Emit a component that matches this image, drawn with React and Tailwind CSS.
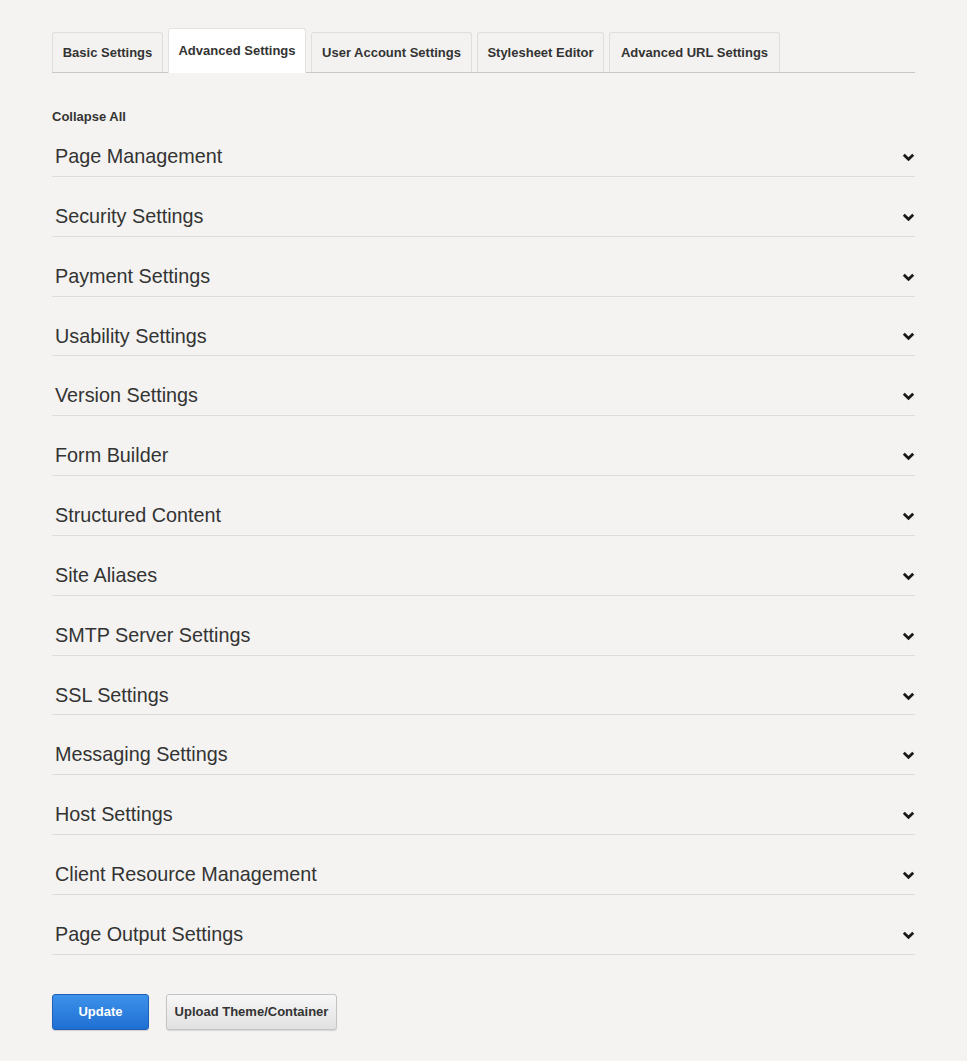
import React from "react";

const tabs = [
  { label: "Basic Settings", w: "w-[111px]" },
  { label: "Advanced Settings", w: "w-[138px]", active: true },
  { label: "User Account Settings", w: "w-[161px]" },
  { label: "Stylesheet Editor", w: "w-[127px]" },
  { label: "Advanced URL Settings", w: "w-[171px]" },
];

const sections = [
  "Page Management",
  "Security Settings",
  "Payment Settings",
  "Usability Settings",
  "Version Settings",
  "Form Builder",
  "Structured Content",
  "Site Aliases",
  "SMTP Server Settings",
  "SSL Settings",
  "Messaging Settings",
  "Host Settings",
  "Client Resource Management",
  "Page Output Settings",
];

function Chevron() {
  return (
    <svg width="13" height="9" viewBox="0 0 13 9" className="mt-[1px]">
      <polyline points="1.8,1.8 6.5,6.3 11.2,1.8" fill="none" stroke="#1a1a1a" strokeWidth="2.8" />
    </svg>
  );
}

export default function App() {
  return (
    <div className="min-h-[1061px] bg-[#f4f3f1] text-[#333] font-['Liberation_Sans',Arial,sans-serif]">
      <div className="ml-[52px] w-[863px] pt-[28px]">
        {/* tabs */}
        <div className="flex items-end gap-[5px] border-b border-[#c9c9c9] h-[45px]">
          {tabs.map((t) =>
            t.active ? (
              <div
                key={t.label}
                className={`${t.w} h-[45px] -mb-px bg-white border border-b-0 border-[#e2e2e2] rounded-t-[3px] flex items-center justify-center text-[13px] font-bold pb-[1px]`}
              >
                {t.label}
              </div>
            ) : (
              <div
                key={t.label}
                className={`${t.w} h-[40px] bg-[#f3f2f0] border border-b-0 border-[#dedede] rounded-t-[3px] flex items-center justify-center text-[13px] font-bold`}
              >
                {t.label}
              </div>
            )
          )}
        </div>

        <div className="mt-[36px] text-[13px] font-bold leading-4">Collapse All</div>

        <div>
          {sections.map((s, i) => (
            <div
              key={s}
              className={`${i === 0 ? "pt-[20px]" : "pt-[28px]"} pb-[7px] border-b border-[#dcdcdc] flex items-center justify-between`}
            >
              <span className="pl-[3px] text-[19.8px] leading-[23.85px] text-[#333]">{s}</span>
              <Chevron />
            </div>
          ))}
        </div>

        <div className="mt-[39px] flex gap-[17px]">
          <button className="w-[97px] h-[36px] rounded-[3px] border border-[#1d62b8] bg-gradient-to-b from-[#3d92ea] to-[#1f6fd3] text-white text-[13px] font-bold shadow-[0_1px_1px_rgba(0,0,0,0.15)]">
            Update
          </button>
          <button className="w-[171px] h-[36px] rounded-[3px] border border-[#c4c4c4] bg-gradient-to-b from-[#f7f7f7] to-[#e1e1e1] text-[#333] text-[13px] font-bold shadow-[0_1px_1px_rgba(0,0,0,0.12)]">
            Upload Theme/Container
          </button>
        </div>
      </div>
    </div>
  );
}
